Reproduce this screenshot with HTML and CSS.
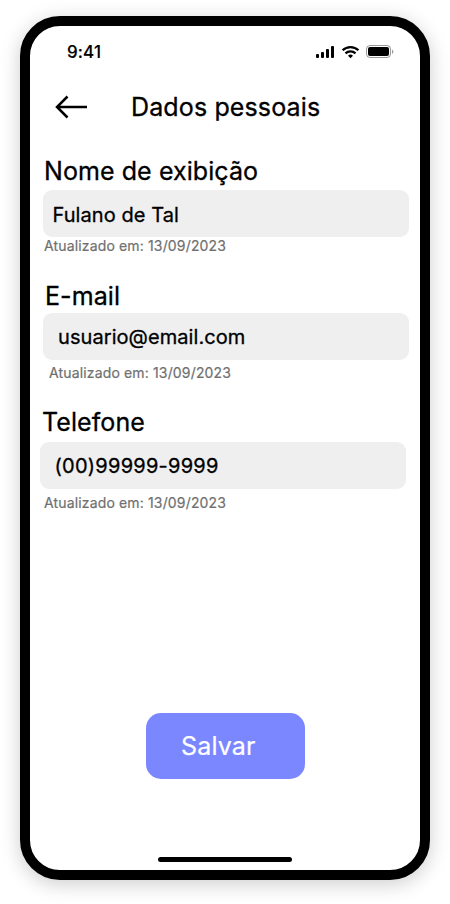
FILE: index.html
```html
<!DOCTYPE html>
<html lang="pt-BR">
<head>
<meta charset="utf-8">
<title>Dados pessoais</title>
<link rel="stylesheet" href="styles.css">
</head>
<body>
<main class="phone">
  <div class="status">
    <span class="time">9:41</span>
    <svg class="indicators" width="80" height="14" viewBox="0 0 80 14">
      <rect x="1" y="9" width="3" height="4" rx="1"/>
      <rect x="6" y="7" width="3" height="6" rx="1"/>
      <rect x="11" y="4" width="3" height="9" rx="1"/>
      <rect x="16" y="1" width="3" height="12" rx="1"/>
      <g fill="none" stroke="#000" stroke-width="2.300"><path d="M27.600 5.300a11.200 11.200 0 0 1 15.800 0M30.500 8.300a7.200 7.200 0 0 1 10 0"/></g>
      <path d="M33 10.700a3.600 3.600 0 0 1 5 0L35.500 13.200z"/>
      <rect x="51.500" y="0.500" width="24" height="12" rx="3.500" fill="none" stroke="#000" stroke-opacity=".4"/>
      <rect x="53" y="2" width="21" height="9" rx="2"/>
      <path d="M77 4.500v4.500q1.400-.7 1.400-2.200T77 4.500z" opacity=".4"/>
    </svg>
  </div>
  <header class="header">
    <svg class="back" width="34" height="26" viewBox="0 0 34 26"><path d="M33 13H3M13.500 2.500 3 13l10.500 10.500" fill="none" stroke="#000" stroke-width="2.500"/></svg>
    <h1 class="title">Dados pessoais</h1>
  </header>
  <form class="form">
    <section class="field name">
      <label class="label" for="name">Nome de exibição</label>
      <input class="input" id="name" value="Fulano de Tal">
      <p class="note">Atualizado em: 13/09/2023</p>
    </section>
    <section class="field email">
      <label class="label" for="email">E-mail</label>
      <input class="input" id="email" value="usuario@email.com">
      <p class="note">Atualizado em: 13/09/2023</p>
    </section>
    <section class="field phone-number">
      <label class="label" for="tel">Telefone</label>
      <input class="input" id="tel" value="(00)99999-9999">
      <p class="note">Atualizado em: 13/09/2023</p>
    </section>
    <button class="save" type="button">Salvar</button>
  </form>
  <div class="home-bar"></div>
</main>
</body>
</html>
```
FILE: styles.css
```css
* { box-sizing: border-box; }
body { margin: 0; padding: 16px 20px 24px; background: #fff; color: #000; font-family: Inter, sans-serif; font-weight: 400; }
.phone { width: 410px; height: 864px; border: 10px solid #000; border-radius: 40px; background: #fff; box-shadow: 0 4px 20px rgba(0,0,0,.2); display: flex; flex-direction: column; }
.status { height: 52px; flex: none; display: flex; justify-content: space-between; align-items: center; padding: 0 25px 0 37px; }
.time { font-size: 17px; font-weight: 500; line-height: 20px; letter-spacing: .1px; -webkit-text-stroke: .15px; }
.indicators { display: block; }
.header { height: 58px; flex: none; display: flex; align-items: center; padding-left: 24px; }
.back { display: block; flex: none; }
.title { margin: 0 0 0 43px; font-size: 25px; line-height: 30px; font-weight: 400; letter-spacing: .13px; -webkit-text-stroke: .3px; }
.form { display: flex; flex-direction: column; margin: 0; }
.field { display: flex; flex-direction: column; height: 125px; padding-left: 13px; }
.label { font-size: 25px; line-height: 30px; margin: 20px 0 4px 1px; letter-spacing: .08px; -webkit-text-stroke: .3px; }
.input { width: 366px; height: 47px; flex: none; border: 0; border-radius: 9px; background: #efefef; padding: 3px 9.5px 0; font: 400 20px/24px Inter, sans-serif; letter-spacing: .07px; -webkit-text-stroke: .3px; color: #000; }
.note { margin: 0 0 0 1px; font-size: 14px; line-height: 18px; letter-spacing: .15px; -webkit-text-stroke: .2px; color: #707070; }
.email .label { margin: 20px 0 2px 2px; }
.email .input { padding: 0 15px; }
.email .note { margin: 4px 0 0 6px; }
.phone-number { height: 126px; padding-left: 10px; }
.phone-number .label { margin: 21px 0 5px 2px; }
.phone-number .input { padding: 1px 14.5px 0; letter-spacing: .25px; }
.phone-number .note { margin: 5px 0 0 4px; }
.save { width: 159px; height: 66px; margin: 201px 0 0 116px; border: 0; border-radius: 15px; background: #7b87ff; color: #fff; font: 400 25px/30px Inter, sans-serif; letter-spacing: .15px; -webkit-text-stroke: .2px; text-align: left; padding: 0 35px; }
.home-bar { width: 134px; height: 5px; border-radius: 3px; background: #000; margin: auto 0 8px 128px; flex: none; }
```
